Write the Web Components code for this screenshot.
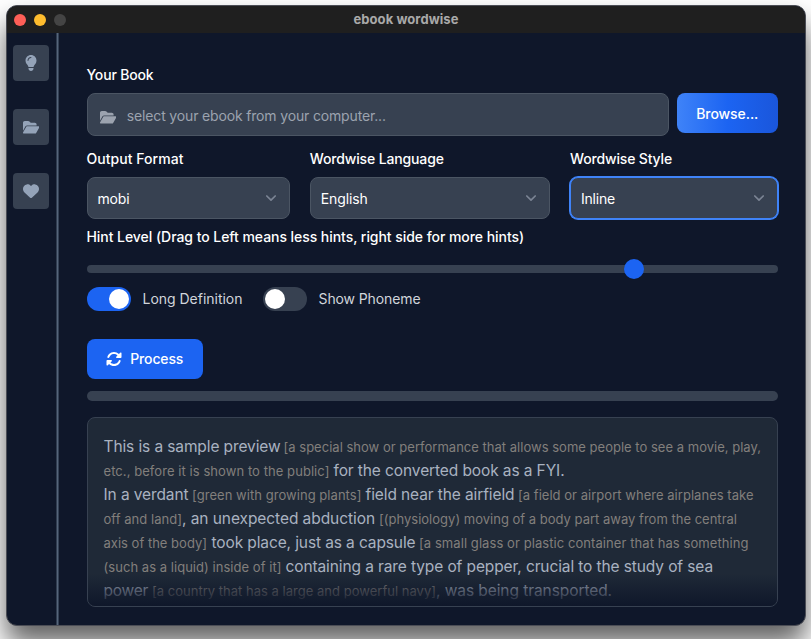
<!DOCTYPE html>
<html lang="en">
<head>
<meta charset="utf-8">
<title>ebook wordwise</title>
<style>
html, body { margin: 0; height: 100%; overflow: hidden; background: #fff; }
body { font-family: Inter, "Liberation Sans", sans-serif; font-size: 14px; line-height: 20px; color: #fff; box-sizing: border-box; padding: 5px 5px 13px 6px; }
</style>
</head>
<body>
<app-window heading="ebook wordwise">
  <side-bar slot="side">
    <side-button icon="bulb"></side-button>
    <side-button icon="folder"></side-button>
    <side-button icon="heart"></side-button>
  </side-bar>
  <book-form></book-form>
</app-window>
<script>
const ICONS = {
  bulb: ['0 0 384 512', 16, 'M272 384c9.6-31.9 29.5-59.1 49.2-86.2c5.2-7.1 10.4-14.2 15.4-21.4c19.8-28.5 31.4-63 31.4-100.3C368 78.8 289.2 0 192 0S16 78.8 16 176c0 37.3 11.6 71.9 31.4 100.3c5 7.2 10.2 14.3 15.4 21.4c19.8 27.1 39.7 54.4 49.2 86.2H272zM192 512c44.2 0 80-35.8 80-80V416H112v16c0 44.2 35.8 80 80 80zM112 176c0 8.8-7.2 16-16 16s-16-7.2-16-16c0-61.9 50.1-112 112-112c8.8 0 16 7.2 16 16s-7.2 16-16 16c-44.2 0-80 35.8-80 80z'],
  folder: ['0 0 576 512', 14.5, 'M88.7 223.8L0 375.8V96C0 60.7 28.7 32 64 32H181.5c17 0 33.3 6.7 45.3 18.7l26.5 26.5c12 12 28.3 18.7 45.3 18.7H416c35.3 0 64 28.7 64 64v32H144c-22.8 0-43.8 12.1-55.3 31.8zm27.6 16.1C122.1 230 132.6 224 144 224H544c11.5 0 22 6.1 27.7 16.1s5.7 22.2-.1 32.1l-112 192C453.9 474 443.4 480 432 480H32c-11.5 0-22-6.1-27.7-16.1s-5.7-22.2 .1-32.1l112-192z'],
  heart: ['0 0 512 512', 16, 'M47.6 300.4L228.3 469.1c7.5 7 17.4 10.9 27.7 10.9s20.2-3.9 27.7-10.9L464.4 300.4c30.4-28.3 47.6-68 47.6-109.5v-5.8c0-69.9-50.5-129.5-119.4-141C347 36.5 300.6 51.4 268 84L256 96 244 84c-32.6-32.6-79-47.5-124.6-39.9C50.5 55.6 0 115.2 0 185.1v5.8c0 41.5 17.2 81.2 47.6 109.5z'],
  rotate: ['0 0 512 512', 16, 'M142.9 142.9c62.2-62.2 162.7-62.5 225.3-1L327 183c-6.9 6.9-8.9 17.2-5.2 26.2s12.5 14.8 22.2 14.8H472c13.3 0 24-10.7 24-24V72c0-9.7-5.8-18.5-14.8-22.2s-19.3-1.7-26.2 5.2L413.4 96.6c-87.6-86.5-228.7-86.2-315.8 1C73.2 122 55.6 150.7 44.8 181.4c-5.9 16.7 2.9 34.9 19.5 40.8s34.9-2.9 40.8-19.5c7.7-21.8 20.2-42.3 37.8-59.8zM16 312V440c0 9.7 5.8 18.5 14.8 22.2s19.3 1.7 26.2-5.2l41.6-41.6c87.6 86.5 228.7 86.2 315.8-1c24.4-24.4 42.1-53.1 52.9-83.7c5.9-16.7-2.9-34.9-19.5-40.8s-34.9 2.9-40.8 19.5c-7.7 21.8-20.2 42.3-37.8 59.8c-62.2 62.2-162.7 62.5-225.3 1L185 329c6.9-6.9 8.9-17.2 5.2-26.2s-12.5-14.8-22.2-14.8H40c-13.3 0-24 10.7-24 24z']
};
const define = (name, html, setup) => customElements.define(name, class extends HTMLElement {
  constructor() { super(); this.attachShadow({ mode: 'open' }); }
  connectedCallback() {
    this.shadowRoot.innerHTML = typeof html === 'function' ? html(this) : html;
    if (setup) setup(this, this.shadowRoot);
  }
});

/* A single line of text whose tracking is set so that it spans the "w" attribute in pixels. */
define('text-run', el => `<style>:host{display:block;flex:none;white-space:pre;width:${el.getAttribute('w')}px}span{display:inline-block}</style><span>${el.getAttribute('text')}</span>`,
  (el, root) => {
    const span = root.querySelector('span');
    const w = +el.getAttribute('w');
    span.style.letterSpacing = ((w - span.getBoundingClientRect().width) / el.getAttribute('text').length).toFixed(4) + 'px';
  });

define('glyph-icon', el => {
  const [box, h, d] = ICONS[el.getAttribute('name')];
  return `<style>:host{display:block;flex:none}svg{display:block;height:${h}px;width:auto}</style><svg viewBox="${box}" height="${h}" fill="currentColor"><path d="${d}"/></svg>`;
});

define('side-button', el => `<style>:host{display:flex;align-items:center;justify-content:center;width:36px;height:36px;border-radius:4px;background:#374151;color:#94a3b8}</style><glyph-icon name="${el.getAttribute('icon')}"></glyph-icon>`);

define('side-bar', `<style>:host{display:flex;flex-direction:column;gap:28px;padding:12.4px 7px 0 6px}</style><slot></slot>`);

define('app-window', el => `<style>
:host{display:flex;flex-direction:column;box-sizing:border-box;height:100%;border:1px solid #4b4d55;border-radius:11px;overflow:hidden;background:#0f172a;box-shadow:0 18px 28px rgba(0,0,0,.62)}
header{display:grid;grid-template-columns:1fr auto 1fr;align-items:center;height:27px;background:#1f1f1f;color:#a9a9a9;font-weight:700;font-size:13px;flex:none}
header text-run{margin-bottom:2px}
.dots{display:flex;gap:8px;padding-left:7px}
i{width:12px;height:12px;border-radius:50%;background:#ff5f57}
i+i{background:#febc2e}i+i+i{background:#444}
.body{display:flex;flex:1;min-height:0}
.rule{width:3px;background:linear-gradient(90deg,#303d50 1px,#56657b 1px 2px,#334155 2px)}
main{flex:1;min-width:0}
</style><header><div class="dots"><i></i><i></i><i></i></div><text-run w="105" text="${el.getAttribute('heading')}"></text-run><span></span></header>
<div class="body"><slot name="side"></slot><div class="rule"></div><main><slot></slot></main></div>`);

define('field-label', el => `<style>:host{display:block;height:20px;font-weight:500;color:#fff}</style><text-run w="${el.getAttribute('w')}" text="${el.getAttribute('text')}"></text-run>`);

define('file-input', `<style>:host{display:flex;align-items:center;box-sizing:border-box;height:42.4px;padding:0 12px;gap:11px;border:1px solid #4b5563;border-radius:8px;background:#374151;color:#9ca3af}glyph-icon{margin-top:5px}text-run{margin-top:2px}</style>
<glyph-icon name="folder"></glyph-icon><text-run w="259" text="select your ebook from your computer..."></text-run>`);

define('select-box', el => `<style>
:host{display:flex;align-items:center;justify-content:space-between;box-sizing:border-box;height:42px;padding:0 12px 0 10px;border:1px solid #4b5563;border-radius:8px;background:#374151;color:#fff}
:host([focused]){border-color:#3f83f8;box-shadow:0 0 0 1px #3f83f8}
text-run{margin-top:1px}
svg{display:block}</style><text-run w="${el.getAttribute('w')}" text="${el.getAttribute('text')}"></text-run>
<svg width="12" height="8" viewBox="0 0 12 8" fill="none" stroke="#7b8494" stroke-width="1.7" stroke-linecap="round" stroke-linejoin="round"><path d="M1.8 2 6 6.2 10.2 2"/></svg>`);

define('action-button', el => `<style>
:host{display:flex;align-items:center;justify-content:center;gap:8px;height:40px;border-radius:8px;background:#1c64f2;color:#fff;font-weight:500}
:host([gradient]){background:linear-gradient(90deg,#3f83f8,#1c64f2 50%,#1a56db)}
:host([gradient]) text-run{margin-top:1px}</style><slot></slot><text-run w="${el.getAttribute('w')}" text="${el.getAttribute('text')}"></text-run>`);

define('range-slider', `<style>:host{display:flex;height:8px;border-radius:4px;background:#374151;align-items:center}i{width:20px;height:20px;border-radius:50%;background:#1c64f2;margin-left:537px;flex:none}</style><i></i>`);

define('toggle-switch', el => `<style>
:host{display:flex;align-items:center;gap:12px;color:#d1d5db}
.t{display:flex;box-sizing:border-box;width:44px;height:24px;padding:2px;border-radius:12px;background:#374151}
:host([on]) .t{background:#1c64f2;justify-content:flex-end}
i{width:20px;height:20px;border-radius:50%;background:#fff}</style><div class="t"><i></i></div><text-run w="${el.getAttribute('w')}" text="${el.getAttribute('text')}"></text-run>`);

/* Preview lines: [kind, start, end, text]; "m" is book text, "h" is a hint. */
const LINES = [
  [['m', 103, 280, 'This is a sample preview'], ['h', 283, 760.5, '[a special show or performance that allows some people to see a movie, play,']],
  [['h', 103, 329, 'etc., before it is shown to the public]'], ['m', 333, 564, 'for the converted book as a FYI.']],
  [['m', 103, 188, 'In a verdant'], ['h', 191.5, 361, '[green with growing plants]'], ['m', 365, 514, 'field near the airfield'], ['h', 517.5, 753, '[a field or airport where airplanes take']],
  [['h', 103, 181.5, 'off and land]'], ['m', 181.5, 374.5, ', an unexpected abduction'], ['h', 378.5, 736.5, '[(physiology) moving of a body part away from the central']],
  [['h', 103, 206.5, 'axis of the body]'], ['m', 211, 415, 'took place, just as a capsule'], ['h', 418.5, 748, '[a small glass or plastic container that has something']],
  [['h', 103, 281, '(such as a liquid) inside of it]'], ['m', 285, 712.5, 'containing a rare type of pepper, crucial to the study of sea']],
  [['m', 103, 147.5, 'power'], ['h', 151.5, 435.5, '[a country that has a large and powerful navy]'], ['m', 435.5, 611.5, ', was being transported.']]
];
define('book-preview', () => `<style>
:host{display:grid;box-sizing:border-box;height:190px;border:1px solid #374151;border-radius:8px;background:#1f2937;overflow:hidden}
.text{grid-area:1/1;padding:17px 0 0 16px;min-width:0}
.line{display:flex;align-items:baseline;height:24px;line-height:24px}
.m{font-size:15.5px;color:#a9b2c0}.h{font-size:13px;color:#827f7c}
.fade{grid-area:1/1;align-self:end;height:32px;background:linear-gradient(180deg,rgba(15,23,42,0),#0f172a)}
</style><div class="text">${LINES.map(l => `<div class="line">${l.map(([k, a, b, t], i) => `<text-run class="${k}" style="margin-left:${i ? a - l[i - 1][2] : 0}px" w="${b - a}" text="${t}"></text-run>`).join('')}</div>`).join('')}</div><div class="fade"></div>`);

define('book-form', `<style>
:host{display:flex;flex-direction:column;padding:32.4px 27px 0 27.5px}
.row{display:grid;grid-template-columns:582px 101.5px;justify-content:space-between;height:42px;margin-top:8px}
.cols{display:grid;grid-template-columns:203px 240px 208px;justify-content:space-between;margin:14px 0 8px}
.cols select-box{margin-top:8px}
range-slider{margin-top:18px}
.toggles{display:flex;gap:20px;margin-top:14px}
.go{width:116.5px;margin-top:28px}
.progress{height:10px;border-radius:5px;background:#374151;margin-top:12px}
book-preview{margin-top:16px}
</style>
<field-label w="67" text="Your Book"></field-label>
<div class="row"><file-input></file-input><action-button gradient w="62" text="Browse..."></action-button></div>
<div class="cols">
<div><field-label w="97" text="Output Format"></field-label><select-box w="32" text="mobi"></select-box></div>
<div><field-label w="134" text="Wordwise Language"></field-label><select-box w="47" text="English"></select-box></div>
<div><field-label w="102" text="Wordwise Style"></field-label><select-box focused w="34" text="Inline"></select-box></div>
</div>
<field-label w="437.5" text="Hint Level (Drag to Left means less hints, right side for more hints)"></field-label>
<range-slider></range-slider>
<div class="toggles"><toggle-switch on w="100" text="Long Definition"></toggle-switch><toggle-switch w="102" text="Show Phoneme"></toggle-switch></div>
<action-button class="go" w="53" text="Process"><glyph-icon name="rotate"></glyph-icon></action-button>
<div class="progress"></div>
<book-preview></book-preview>`);
</script>
</body>
</html>
